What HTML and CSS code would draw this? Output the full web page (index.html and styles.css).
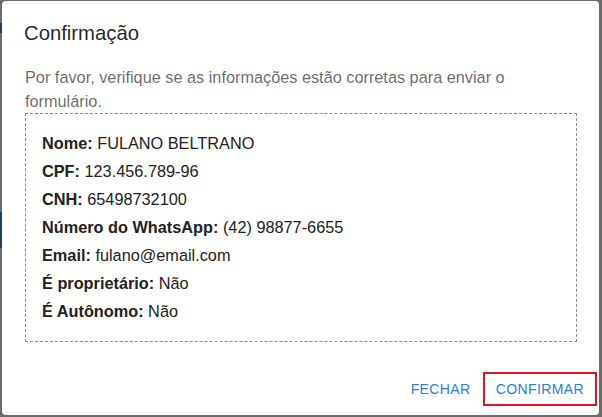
FILE: index.html
```html
<!DOCTYPE html>
<html lang="pt-BR">
<head>
<meta charset="utf-8">
<title>Confirmação</title>
<link rel="stylesheet" href="styles.css">
</head>
<body>
<div class="dialog">
  <h2 class="title">Confirmação</h2>
  <div class="content">
    <p class="intro">Por favor, verifique se as informações estão corretas para enviar o formulário.</p>
    <div class="box">
      <p class="row"><b>Nome:</b> FULANO BELTRANO</p>
      <p class="row"><b>CPF:</b> 123.456.789-96</p>
      <p class="row"><b>CNH:</b> 65498732100</p>
      <p class="row"><b>Número do WhatsApp:</b> (42) 98877-6655</p>
      <p class="row"><b>Email:</b> fulano@email.com</p>
      <p class="row"><b>É proprietário:</b> Não</p>
      <p class="row"><b>É Autônomo:</b> Não</p>
    </div>
  </div>
  <div class="actions">
    <button class="btn btn-plain">FECHAR</button>
    <button class="btn btn-highlight">CONFIRMAR</button>
  </div>
</div>
</body>
</html>
```

FILE: styles.css
```css
html, body {
  margin: 0;
  padding: 0;
  height: 100%;
}
body {
  background-color: #6b6b6b;
  background-image:
    linear-gradient(#1f3d5c, #1f3d5c),
    linear-gradient(#1f3d5c, #1f3d5c);
  background-size: 2px 10px, 2px 36px;
  background-position: 0 23px, 0 212px;
  background-repeat: no-repeat;
  font-family: "Liberation Sans", Arial, sans-serif;
  overflow: hidden;
}
.dialog {
  margin: 1px 3px 0 2px;
  height: 414px;
  background: #fff;
  border-radius: 4px;
  display: flex;
  flex-direction: column;
  box-sizing: border-box;
}
.title {
  margin: 0;
  padding: 16px 22px;
  font-size: 20.3px;
  font-weight: 400;
  line-height: 32px;
  color: rgba(0, 0, 0, 0.87);
}
.content {
  padding: 0 22px 0 23px;
}
.intro {
  margin: 0;
  font-size: 16.3px;
  line-height: 24px;
  color: rgba(0, 0, 0, 0.6);
}
.box {
  margin-top: 0;
  border: 1px dashed #8a8a8a;
  padding: 15px 16px 16px;
}
.row {
  margin: 0;
  font-size: 16.3px;
  line-height: 28px;
  color: #222;
}
.row b {
  font-weight: 700;
}
.actions {
  margin-top: auto;
  display: flex;
  justify-content: flex-end;
  align-items: center;
  padding: 0 2px 9px 0;
}
.btn {
  font-family: "Liberation Sans", Arial, sans-serif;
  font-size: 14px;
  letter-spacing: 0.4px;
  color: #2b80d6;
  background: transparent;
  border: 2px solid transparent;
  height: 34px;
  padding: 0 11px;
  cursor: pointer;
}
.btn-plain {
  border: 0;
  padding: 0 12px 0 8px;
}
.btn-highlight {
  border-color: #e3141e;
}
```
